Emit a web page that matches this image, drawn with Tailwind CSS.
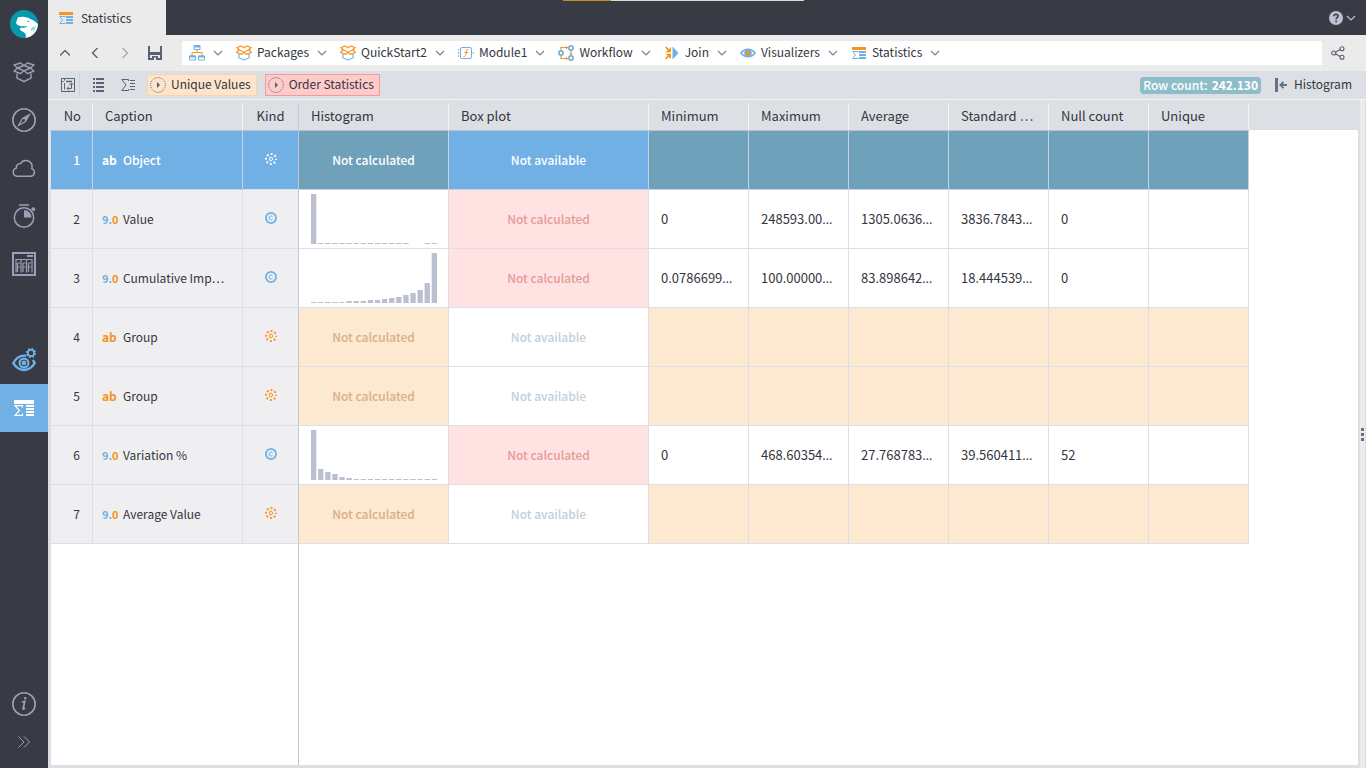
<!DOCTYPE html>
<html lang="en">
<head>
  <meta charset="UTF-8" />
  <title>Statistics</title>
  <meta name="viewport" content="width=device-width, initial-scale=1.0" />
  <script src="https://cdn.jsdelivr.net/npm/@tailwindcss/browser@4"></script>
</head>
<body class="h-screen flex overflow-hidden bg-[#383a44] font-['Noto_Sans_CJK_KR','Open_Sans',sans-serif] text-xs leading-5 text-[#33363f]">

  <!-- shared icons -->
  <svg class="hidden" aria-hidden="true">
    <symbol id="chev" viewBox="0 0 10 6"><path d="M1 1l4 4 4-4" fill="none" stroke="currentColor" stroke-width="1.2" /></symbol>
    <symbol id="box" viewBox="0 0 16 16">
      <path d="M3 9v3.700l5 2.500 5-2.500V9" fill="none" stroke="#70b0e4" stroke-width="1.200" />
      <path d="M8 2.800L5.200 1 1 2.500l2 2.300-2.300 2.700L5.800 9.400 8 7.300l2.200 2.100 5.100-1.900L13 4.800l2-2.300L10.800 1z" fill="#fff" stroke="#f7931e" stroke-width="1.300" stroke-linejoin="round" />
      <path d="M3 4.800l5 2.400 5-2.400" fill="none" stroke="#f7931e" stroke-width="1.100" />
    </symbol>
    <symbol id="stats" viewBox="0 0 14 13">
      <path d="M0 0h14v3H0z" fill="#f7931e" />
      <path d="M6 5.500V4.500H.7L3.500 8 .7 11.500H6v-1" fill="none" stroke="#70b0e4" />
      <path d="M7 4h7v2H7zM7 7h7v2H7zM7 10h7v2H7z" fill="#70b0e4" />
    </symbol>
    <symbol id="discrete" viewBox="0 0 12 12">
      <circle cx="6" cy="6" r="5" fill="none" stroke="currentColor" stroke-width="2" stroke-dasharray="1.900 2.027" stroke-dashoffset="1" />
      <path d="M4.700 4.200h1.100a1.800 1.800 0 010 3.600H4.700z" fill="none" stroke="currentColor" />
    </symbol>
    <symbol id="continuous" viewBox="0 0 12 12">
      <circle cx="6" cy="6" r="5.100" fill="none" stroke="currentColor" stroke-width="1.800" />
      <path d="M7.600 4.700a2 2 0 100 2.600" fill="none" stroke="currentColor" />
    </symbol>
    <symbol id="run" viewBox="0 0 16 16">
      <circle cx="8" cy="8" r="7.400" fill="none" stroke="#5b6173" stroke-width="1" stroke-dasharray="1 1" />
      <path d="M7 5l3 3-3 3z" fill="#5b6173" />
    </symbol>
  </svg>

  <aside class="w-12 shrink-0 flex flex-col text-[#9ca0b6]">
    <a href="#" class="size-12 flex items-center justify-center" aria-label="Home">
      <svg class="size-7" viewBox="0 0 28 28">
        <circle cx="14" cy="14" r="14" fill="#0899ae" />
        <path d="M8 7.200c3.500-.8 7-.7 10 .6 4 1.800 7.500 3.700 9.900 6.200A14 14 0 0115.500 27.900c.9-2.400.2-4.500-1.800-5.700-1.700-.9-3-1.500-3.900-2.900l.4-1.600c3 .3 5.500-.2 7.600-1.800-3.300.6-6.500.4-9.200-.5-2-1-2.800-2-2.200-4z" fill="#fff" />
        <circle cx="18.300" cy="11.500" r=".8" fill="#0899ae" />
        <path d="M23.500 16.500l-1.500 3M25.300 16.500l-2.300 4.500M22 18.500l-1 2" fill="none" stroke="#0899ae" stroke-width=".6" />
      </svg>
    </a>
    <a href="#" class="size-12 flex items-center justify-center" aria-label="Packages">
      <svg class="size-6" viewBox="0 0 24 24" fill="none" stroke="currentColor" stroke-width="1.400" stroke-linejoin="round">
        <path d="M12 5.500L8.500 3 2 5l3.500 3L2 11.200 8.500 13.500 12 10.800l3.500 2.700 6.500-2.300L18.500 8 22 5l-6.500-2zM5.500 8L12 5.500 18.500 8 12 10.800zM5 13.500v4.700l7 3.300 7-3.300v-4.700" />
      </svg>
    </a>
    <a href="#" class="size-12 flex items-center justify-center" aria-label="Navigate">
      <svg class="size-6" viewBox="0 0 24 24" fill="none" stroke="currentColor">
        <circle cx="12" cy="12" r="11.200" stroke-width="1.600" />
        <path d="M17.500 6.500l-4 7-7 4 4-7z" stroke-width="1.200" /><path d="M17.500 6.500l-7 4 3 3z" fill="currentColor" stroke="none" /><circle cx="12" cy="12" r=".9" fill="#383a44" stroke="none" />
      </svg>
    </a>
    <a href="#" class="size-12 flex items-center justify-center" aria-label="Cloud">
      <svg class="size-6" viewBox="0 0 24 24" fill="none" stroke="currentColor" stroke-width="1.500">
        <path d="M5 20.300a4.200 4.200 0 01-.7-8.200 4 4 0 014.300-4.600 6.200 6.200 0 0111.500 3.300c0 .8 0 1.300-.3 1.800a4 4 0 01-.8 7.700z" />
      </svg>
    </a>
    <a href="#" class="size-12 flex items-center justify-center" aria-label="Schedule">
      <svg class="size-6" viewBox="0 0 24 24" fill="none" stroke="currentColor" stroke-width="1.500">
        <circle cx="12" cy="13.500" r="9.700" /><path d="M7 .9h10M19.500 4.500l2.500 2.500" /><path d="M20.500 3.500l2.500 2.500" stroke-width="2" /><path d="M12 6a7.500 7.500 0 017.500 7.500H12z" fill="currentColor" stroke="none" />
      </svg>
    </a>
    <a href="#" class="size-12 flex items-center justify-center" aria-label="Reports">
      <svg class="size-6" viewBox="0 0 24 24" fill="none" stroke="currentColor" stroke-width="1.500">
        <path d="M1 1h22v22H1z" stroke-width="2" /><path d="M15 4h6" stroke-width="2" /><path d="M4 20.500V7.500h16v13M9 8v12.500M14.500 8v12.500M5.500 11v9M6 11h2M11 11v9M11 11h2.500M16.500 11v9M16.500 11H19M6 15h2M11 15h2.500M16.500 15H19" stroke-width="1.200" />
      </svg>
    </a>
    <a href="#" class="mt-12 size-12 flex items-center justify-center text-[#70b0e4]" aria-label="Preview">
      <svg class="size-6" viewBox="0 0 24 24" fill="none" stroke="currentColor">
        <path d="M14 7.700C8.500 7 4 10 1.300 15.200 4 19.500 7.500 22 12 22s8-2.500 10.700-6.800c-.6-1.400-1.200-2.200-2-3" stroke-width="2.400" />
        <circle cx="12" cy="15" r="4.400" stroke-width="2.200" /><circle cx="12" cy="15" r="2.400" fill="currentColor" stroke="none" />
        <circle cx="19" cy="5" r="3.200" stroke-width="1.800" /><circle cx="19" cy="5" r="4.400" stroke-width="1.500" stroke-dasharray="1.750 1.700" />
      </svg>
    </a>
    <a href="#" class="size-12 flex items-center justify-center bg-[#70b0e4] text-white" aria-label="Statistics">
      <svg class="size-6" viewBox="0 0 24 24" fill="currentColor">
        <path d="M2 4h20v4H2zM14 9h8v2h-8zM14 12h8v2h-8zM14 15h8v2h-8zM14 18h8v2h-8z" />
        <path d="M10.500 11.500V9.600H3l4.500 4.900L3 19.400h7.500v-1.900" fill="none" stroke="currentColor" stroke-width="1.200" />
      </svg>
    </a>
    <a href="#" class="mt-auto size-12 flex items-center justify-center" aria-label="About">
      <svg class="size-6" viewBox="0 0 24 24" fill="none" stroke="currentColor">
        <circle cx="12" cy="12" r="11.200" stroke-width="1.600" />
        <circle cx="13.200" cy="6.300" r="1.200" fill="currentColor" stroke="none" /><path d="M9.800 10.200c1.300-.2 2-.6 3-.8l-1.700 7.200c-.2.900.8.600 2-.6" stroke-width="1.700" />
      </svg>
    </a>
    <button class="mb-3 h-7 flex items-center justify-center" aria-label="Expand">
      <svg class="size-3" viewBox="0 0 12 12" fill="none" stroke="currentColor"><path d="M.5.500L6 6 .5 11.500M6 .5L11.500 6 6 11.500" /></svg>
    </button>
  </aside>

  <div class="relative flex-1 min-w-0 flex flex-col">
    <div class="absolute top-0 left-[515px] w-[241px] h-px flex"><i class="w-12 bg-[#c38d1e]"></i><i class="flex-1 bg-[#d9d9da]"></i></div>

    <header class="h-[35px] shrink-0 flex justify-between">
      <a href="#" class="w-[118px] pl-[11px] pt-px flex items-center gap-2 bg-[#ebebeb]">
        <svg class="w-3.5 h-[13px]"><use href="#stats" /></svg>Statistics
      </a>
      <button class="flex items-center gap-[3px] pr-2.5 text-[#bcc1d4]" aria-label="Help">
        <svg class="size-3.5" viewBox="0 0 14 14"><circle cx="7" cy="7" r="7" fill="currentColor" /><path d="M5 5.200a2 2 0 114 0C9 6.500 7.100 6.700 7.100 8.300M7.100 9.500v1.700" fill="none" stroke="#383a44" stroke-width="1.600" /></svg>
        <svg class="w-2.5 h-1.5"><use href="#chev" /></svg>
      </button>
    </header>

    <div class="h-9 shrink-0 flex items-center bg-[#ebebeb] text-[#5b6173]">
      <button class="w-[30px] pl-1 flex justify-center" aria-label="Up"><svg class="w-2.5 h-2.5" viewBox="0 0 10 10"><path d="M0 7.500l5-5 5 5" fill="none" stroke="currentColor" stroke-width="1.400" /></svg></button>
      <button class="w-[34px] flex justify-center" aria-label="Back"><svg class="w-2.5 h-2.5" viewBox="0 0 10 10"><path d="M7.500 0l-5 5 5 5" fill="none" stroke="currentColor" stroke-width="1.400" /></svg></button>
      <button class="w-[26px] flex justify-center text-[#a4a8b2]" aria-label="Forward"><svg class="w-2.5 h-2.5" viewBox="0 0 10 10"><path d="M2.500 0l5 5-5 5" fill="none" stroke="currentColor" stroke-width="1.400" /></svg></button>
      <button class="w-[34px] flex justify-center" aria-label="Save">
        <svg class="size-3.5" viewBox="0 0 14 14" fill="currentColor"><path d="M0 0h2v6h10V0h2v14h-2V9H2v5H0zM4 10h6v4H8v-2.500H6V14H4z" /><path d="M0 6h14v3H0zM0 12h4v2H0zM10 12h4v2h-4z" /></svg>
      </button>
      <nav class="ml-2.5 pl-[7px] flex-1 h-6 flex items-center gap-[13px] bg-white text-[#33363f]" aria-label="Path">
        <div class="flex items-center gap-2">
          <svg class="w-4 h-4" viewBox="0 0 16 16" fill="none"><path d="M3 11V7.500h10V11M8 5v2.500" stroke="#f7931e" /><path d="M5 .5h6v4H5zM.5 11h6v4h-6zM9.500 11h6v4h-6z" stroke="#70b0e4" /><path d="M5 .500h6v2H5zM.500 10.500h6v2h-6zM9.500 10.500h6v2h-6z" fill="#70b0e4" /></svg>
          <button aria-label="Open root" class="text-[#7a8090]"><svg class="w-2.5 h-1.5"><use href="#chev" /></svg></button>
        </div>
        <div class="flex items-center">
          <svg class="size-4"><use href="#box" /></svg><a href="#" class="ml-[5px] mr-2 pb-0.5">Packages</a>
          <button aria-label="Open Packages" class="text-[#7a8090]"><svg class="w-2.5 h-1.5"><use href="#chev" /></svg></button>
        </div>
        <div class="flex items-center">
          <svg class="size-4"><use href="#box" /></svg><a href="#" class="ml-[5px] mr-2 pb-0.5">QuickStart2</a>
          <button aria-label="Open QuickStart2" class="text-[#7a8090]"><svg class="w-2.5 h-1.5"><use href="#chev" /></svg></button>
        </div>
        <div class="flex items-center">
          <svg class="size-4" viewBox="0 0 16 16" fill="none"><rect x="2.500" y="2.500" width="11" height="11" rx="1.500" stroke="#70b0e4" /><path d="M0 5h1.200M0 8h1.200M0 11h1.200M14.800 8H16" stroke="#70b0e4" stroke-width="1.500" /><path d="M10.500 4.500C8 4 8.500 7 8 8.500S7.500 12 5.500 11.500M6.500 7.500h3.500" stroke="#f7931e" /></svg>
          <a href="#" class="ml-[5px] mr-2 pb-0.5">Module1</a>
          <button aria-label="Open Module1" class="text-[#7a8090]"><svg class="w-2.5 h-1.5"><use href="#chev" /></svg></button>
        </div>
        <div class="flex items-center">
          <svg class="size-4" viewBox="0 0 16 16" fill="none"><path d="M3 5V2.500h7M3 11v2.500h7M13 5v6" stroke="#f7931e" stroke-width="1.200" /><path d="M8 .8L10.300 2.500 8 4.200zM8 11.800l2.300 1.700L8 15.200zM11.500 8.500h3L13 10.500z" fill="#f7931e" /><g stroke="#70b0e4" stroke-width="1.700"><circle cx="3" cy="8" r="2.100" /><circle cx="13" cy="3" r="2.100" /><circle cx="13" cy="13" r="2.100" /></g></svg>
          <a href="#" class="ml-[5px] mr-2 pb-0.5">Workflow</a>
          <button aria-label="Open Workflow" class="text-[#7a8090]"><svg class="w-2.5 h-1.5"><use href="#chev" /></svg></button>
        </div>
        <div class="flex items-center">
          <svg class="size-4" viewBox="0 0 16 16"><path d="M8.500 1.500L14.500 8l-6 6.500z" fill="#70b0e4" /><path d="M1.700 2L5 5.500M1.700 14L5 10.500" stroke="#f7931e" stroke-width="1.800" /><path d="M7 2v5.300H1.500zM7 14V8.700H1.500z" fill="#f7931e" /></svg>
          <a href="#" class="ml-[5px] mr-2 pb-0.5">Join</a>
          <button aria-label="Open Join" class="text-[#7a8090]"><svg class="w-2.5 h-1.5"><use href="#chev" /></svg></button>
        </div>
        <div class="flex items-center">
          <svg class="size-4" viewBox="0 0 16 16"><path d="M1 8c3.500-5 10.500-5 14 0-3.500 5-10.500 5-14 0z" fill="#fff" stroke="#70b0e4" stroke-width="1.700" /><circle cx="8" cy="8" r="3.800" fill="#70b0e4" /><circle cx="8" cy="8" r="2.300" fill="#f7931e" /></svg>
          <a href="#" class="ml-[5px] mr-2 pb-0.5">Visualizers</a>
          <button aria-label="Open Visualizers" class="text-[#7a8090]"><svg class="w-2.5 h-1.5"><use href="#chev" /></svg></button>
        </div>
        <div class="flex items-center">
          <svg class="w-4 h-[13px]"><use href="#stats" /></svg><a href="#" class="ml-[5px] mr-2 pb-0.5">Statistics</a>
          <button aria-label="Open Statistics" class="text-[#7a8090]"><svg class="w-2.5 h-1.5"><use href="#chev" /></svg></button>
        </div>
      </nav>
      <button class="w-11 pr-3 flex justify-center" aria-label="Share">
        <svg class="size-3.5" viewBox="0 0 14 14" fill="none" stroke="currentColor" stroke-width="1.100"><path d="M4.500 6.300L9 3.500M4.500 7.700L9 10.500" /><circle cx="2.700" cy="7" r="2" /><circle cx="11" cy="2.700" r="2" /><circle cx="11" cy="11.300" r="2" /></svg>
      </button>
    </div>

    <div class="h-[29px] shrink-0 pl-3 pr-3.5 flex items-center bg-[#dce0e5] border-b border-[#f3f4f6] text-[#5b6173]">
      <button class="h-6 w-5 flex items-center justify-start border-r border-[#c7d3dd]" aria-label="Pivot">
        <svg class="w-4 h-4" viewBox="0 0 16 16" fill="none" stroke="currentColor"><path d="M1.500 1.500h13v13h-13zM1.500 4.500h2M4.500 1.500v2M4.500 6v6.500M11.500 6.500v5h-4" /><path d="M6 4.500h6" stroke-width="1.500" /><path d="M9.500 8l2-2 2 2M9 9.500l-2 2 2 2" /></svg>
      </button>
      <button class="ml-[13px]" aria-label="List"><svg class="w-3 h-3.5" viewBox="0 0 12 14" fill="currentColor"><path d="M0 0h2v2H0zM0 4h2v2H0zM0 8h2v2H0zM0 12h2v2H0zM3 0h8v2H3zM3 4h8v2H3zM3 8h8v2H3zM3 12h8v2H3z" /></svg></button>
      <button class="ml-4" aria-label="Totals"><svg class="w-3.5 h-3.5" viewBox="0 0 14 14" fill="none" stroke="currentColor"><path d="M7.500 3V1.500H.8L5 7 .8 12.500h6.700V11M9 2.500h5M9 5.500h5M9 8.500h5M9 11.500h5" /></svg></button>
      <button class="ml-3 h-[22px] pl-[2px] pr-[5px] flex items-center gap-[5px] bg-[#fde5cd] border border-[#fbd5a9] text-[#33363f]"><svg class="size-4"><use href="#run" /></svg><span class="pb-0.5">Unique Values</span></button>
      <button class="ml-2 h-[22px] pl-[2px] pr-[5px] flex items-center gap-[5px] bg-[#ffcaca] border border-[#ee9c9c] text-[#33363f]"><svg class="size-4"><use href="#run" /></svg><span class="pb-0.5">Order Statistics</span></button>
      <div class="ml-auto h-[17px] px-[3px] flex items-center gap-1 rounded-sm bg-[#8ebdca] text-white font-medium">Row count: <b>242.130</b></div>
      <button class="ml-3.5 flex items-center gap-[7px] text-[#33363f]">
        <svg class="w-3 h-3.5 text-[#667086]" viewBox="0 0 12 14"><path d="M0 0h3v14H0z" fill="currentColor" /><path d="M12 7H6M8.500 3.800L5.300 7l3.200 3.200" fill="none" stroke="currentColor" stroke-width="1.800" /></svg><span class="pb-0.5">Histogram</span>
      </button>
    </div>

    <div class="flex-1 min-h-0 flex bg-[#dce0e5]">
      <main class="flex-1 min-w-0 flex flex-col border-l-3 border-r-2 border-b-3 border-[#dce0e5] bg-white">
        <table class="w-full table-fixed border-separate border-spacing-0">
          <colgroup>
            <col class="w-[42px]" /><col class="w-[150px]" /><col class="w-14" /><col class="w-[150px]" /><col class="w-[200px]" />
            <col class="w-[100px]" /><col class="w-[100px]" /><col class="w-[100px]" /><col class="w-[100px]" /><col class="w-[100px]" /><col class="w-[100px]" /><col />
          </colgroup>
          <thead><tr id="head"></tr></thead>
          <tbody id="rows"></tbody>
        </table>
        <div class="flex-1 w-[248px] border-r border-[#c5c7d2]"></div>
      </main>
      <div class="w-1.5 flex flex-col items-center justify-center gap-[2px] bg-[#ebebeb] border-r border-[#dddddf]">
        <i class="mr-px size-[3px] bg-[#667086]"></i><i class="mr-px size-[3px] bg-[#667086]"></i><i class="mr-px size-[3px] bg-[#667086]"></i>
      </div>
    </div>
  </div>

  <script>
    const heads = ["No", "Caption", "Kind", "Histogram", "Box plot", "Minimum", "Maximum", "Average", "Standard …", "Null count", "Unique"];

    // hist: bar heights in px, left out when the column has not been calculated
    const rows = [
      { caption: "Object", type: "ab", selected: true },
      { caption: "Value", type: "9.0", hist: [50,1,1,1,1,1,1,1,1,1,1,1,1,1,0,0,1,1], stats: ["0", "248593.00…", "1305.0636…", "3836.7843…", "0", ""] },
      { caption: "Cumulative Imp…", type: "9.0", hist: [1,1,1,1,1,2,2,2,3,3,4,5,6,8,10,13,20,50], stats: ["0.0786699…", "100.00000…", "83.898642…", "18.444539…", "0", ""] },
      { caption: "Group", type: "ab" },
      { caption: "Group", type: "ab" },
      { caption: "Variation %", type: "9.0", hist: [50,11,8,6,3,2,1,1,1,1,1,1,1,1,1,1,1,1], stats: ["0", "468.60354…", "27.768783…", "39.560411…", "52", ""] },
      { caption: "Average Value", type: "9.0" }
    ];

    document.getElementById("head").innerHTML = heads.map((h, i) => {
      const align = i === 0 ? "text-right pr-[11px]" : i === 2 ? "text-center" : "text-left pl-3";
      const line = i === 2 ? "border-[#c5c7d2]" : "border-[#f3f4f6]";
      return `<th class="h-[31px] p-0 pt-[3px] bg-[#dce0e5] border-b border-[#bcc1c8] font-normal text-[13px] leading-[26px]"><div class="h-[27px] border-r ${line} ${align}">${h}</div></th>`;
    }).join("") + `<td class="bg-[#dce0e5] border-b border-white"></td>`;

    function histogram(bars) {
      const rects = bars.map((h, i) => `<rect x="${(i * 7.1).toFixed(1)}" y="${50 - h}" width="5.3" height="${h}" />`).join("");
      return `<svg class="ml-3 w-[126px] h-[50px] fill-[#bbbfd0]" viewBox="0 0 126 50">${rects}</svg>`;
    }

    // the CJK font centres an ellipsis that follows digits, so it gets a Latin font
    function value(s) {
      return s.replace("…", `<span class="font-['Open_Sans',sans-serif]">…</span>`);
    }

    function typeIcon(row) {
      if (row.type === "ab") {
        return `<b class="${row.selected ? "text-white" : "text-[#f7931e]"}">ab</b>`;
      }
      return `<b class="text-[11px] text-[#70b0e4]">9.<span class="text-[#f7931e]">0</span></b>`;
    }

    document.getElementById("rows").innerHTML = rows.map((row, n) => {
      const sel = row.selected;
      const line = sel ? "border-[#c3d3df]" : "border-[#dce0e5]";
      const cell = `h-[59px] p-0 border-r border-b ${line}`;
      const left = sel ? "bg-[#70b0e4] text-white font-medium" : "bg-[#efeff1]";
      const missing = sel ? "bg-[#6fa1ba] text-white" : "bg-[#fde8d0] text-[#dcae86]";
      let box = "text-[#c3d0d9]";
      if (sel) box = "bg-[#70b0e4] text-white";
      if (row.hist) box = "bg-[#ffe2e2] text-[#e59c98]";
      const kind = row.hist ? "continuous" : "discrete";
      const kindColor = sel ? "text-white" : row.hist ? "text-[#70b0e4]" : "text-[#f7931e]";
      const stats = (row.stats || ["", "", "", "", "", ""]).map(s =>
        `<td class="${cell} pl-3 text-[13px] ${row.stats ? "" : missing}">${value(s)}</td>`).join("");
      return `<tr>
        <td class="${cell} ${left} text-right pr-3">${n + 1}</td>
        <td class="${cell} ${left}"><div class="pl-[9px] flex items-center"><span class="w-[21px]">${typeIcon(row)}</span>${row.caption}</div></td>
        <td class="h-[59px] p-0 pb-0.5 border-r border-b border-r-[#c5c7d2] border-b-[#dce0e5] ${left}"><svg class="mx-auto size-3 ${kindColor}"><use href="#${kind}" /></svg></td>
        <td class="${cell} ${row.hist ? "" : missing} text-center font-medium">${row.hist ? histogram(row.hist) : "Not calculated"}</td>
        <td class="${cell} ${box} text-center font-medium">${row.hist ? "Not calculated" : "Not available"}</td>
        ${stats}<td></td>
      </tr>`;
    }).join("");
  </script>
</body>
</html>
